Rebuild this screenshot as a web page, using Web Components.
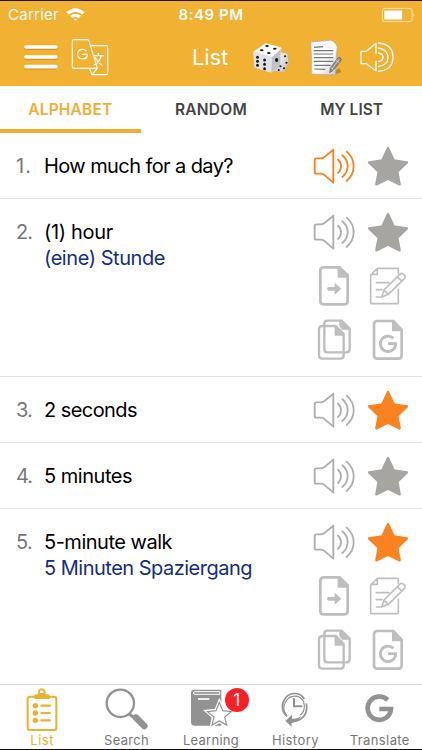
<!DOCTYPE html>
<html lang="en"><head><meta charset="utf-8"><title>List</title>
<style>html,body{margin:0;padding:0;height:750px;overflow:hidden;background:#fff}body{font-family:Inter,"Liberation Sans",sans-serif}</style></head>
<body><phrase-app></phrase-app>
<script>
const sheet = 'svg{display:block;width:100%;height:100%;overflow:visible}';
const ICONS = {
speaker:['33 15 126 126','<g fill="none" stroke="currentColor" stroke-width="5.500" stroke-linejoin="round" stroke-linecap="round"><path d="M94 29V128L66 104Q62 101 57 101H43Q38 101 38 96V60Q38 55 43 55H57Q62 55 66 52Z"/><path d="M108 59Q117 66 117 79Q117 91 108 99M121 46Q137 59 137 79Q137 98 121 111M134 35Q155 53 155 79Q155 105 134 123"/></g>'],
star:['195 15 126 126','<path d="M258 24L275 61L315 67L286 95L293 133L258 116L223 133L230 95L201 67L241 61Z" fill="currentColor" stroke="currentColor" stroke-width="7" stroke-linejoin="round"/>'],
arrow:['33 30 126 126','<path d="M64 37H113L137 61V138Q137 148 127 148H65Q55 148 55 138V47Q55 37 65 37Z" fill="none" stroke="currentColor" stroke-width="8"/><path d="M107 36H114L138 60V68H107ZM80 96H98V83L118 101L98 119V107H80Q75 107 75 101.500Q75 96 80 96Z" fill="currentColor"/>'],
edit:['195 30 126 126','<g fill="none" stroke="currentColor" stroke-width="4.800" stroke-linejoin="round" stroke-linecap="round"><path d="M289 55V40H226L206 60V144Q206 146 208 146H287Q289 146 289 144V103M226 40V58H207M223 83H261M223 104H240M223 126H238"/><path d="M246 105L293 58Q299 52 306 59Q313 66 307 71L259 118L239 126ZM246 105L259 118M286 65L299 78"/></g>'],
copy:['33 192 126 126','<g fill="none" stroke="currentColor" stroke-width="7"><path d="M101 213H61Q51 213 51 223V301Q51 311 61 311H115Q125 311 125 301V237Z"/><path d="M119 197H76Q67 197 67 206V283Q67 292 76 292H134Q143 292 143 283V221Z"/></g><path d="M98 213H103L126 236V242H98ZM112 196H119L144 220V224H120Q112 216 112 211Z" fill="currentColor"/>'],
gdoc:['195 192 126 126','<path d="M274 198H226Q216 198 216 208V300Q216 311 226 311H289Q299 311 299 301V224Z" fill="none" stroke="currentColor" stroke-width="8"/><path d="M270 197H276L300 222V229H270Z" fill="currentColor"/><path d="M274 250A23 23 0 1 0 281 266H258" fill="none" stroke="currentColor" stroke-width="8.500"/>'],
menu:['60 105 126 126','<g stroke-linecap="round" stroke-width="11"><path d="M78 141H168M78 171H168M78 200H168" stroke="#a66e20" opacity=".55"/><path d="M78 138H168M78 168H168M78 197H168" stroke="#fff"/></g>'],
translate:['207 105 126 126','<g fill="none" stroke="#fff" stroke-width="3.500" stroke-linejoin="round" stroke-linecap="round"><path d="M222 116H261Q265 116 267 120L292 202H222Q217 202 217 197V121Q217 116 222 116ZM271 134H318Q323 134 323 139V216Q323 221 318 221H276L269 203M292 202L276 221"/><path d="M259 150Q253 144 246 145Q233 147 233 159Q233 173 247 174Q262 174 262 160H248M282 164H311M295 157V164M304 165Q298 184 282 192M286 170Q293 185 306 193"/></g>'],
hspeaker:['434 105 126 126','<g fill="none" stroke="#fff" stroke-width="4" stroke-linejoin="round"><path d="M494 158V127L465 151H449V188H465L494 210V180"/><path d="M500 126Q545 130 545 169Q545 208 500 211M500 141Q530 145 530 169Q530 193 500 197M500 156Q515 158 515 169Q515 180 500 182"/></g>'],
dice:['0 0 126 126','<defs><linearGradient id="a" x2="1" y2="1"><stop stop-color="#fff"/><stop offset="1" stop-color="#bfc0c5"/></linearGradient></defs><g transform="translate(-5 0) scale(1.060 1)"><path d="M85 52Q89 47 95 50L109 52Q112 54 111 58L114 79Q114 83 111 85L103 105Q101 109 97 108L72 104Z" fill="url(#a)" stroke="#b3aba2"/><path d="M17 45L46 24Q50 21 54 23L90 34Q95 36 93 41L90 88Q90 92 86 95L67 108Q64 110 60 109L22 96Q17 94 17 90L14 51Q13 47 17 45Z" fill="#eee"/><path d="M16 47L63 61Q68 62 67 68L65 109L22 96Q17 94 17 90Z" fill="#e1e1e6"/><path d="M67 62L92 37L90 88Q90 92 86 95L65 109Z" fill="#c0c2c8"/><path d="M18 45L48 23Q51 22 54 23L90 34Q95 36 89 42L70 60Q67 63 62 61Z" fill="#fcfcfc"/><g fill="#171717"><ellipse cx="53" cy="30" rx="5" ry="3"/><ellipse cx="75" cy="38" rx="5" ry="3"/><ellipse cx="38" cy="43" rx="5" ry="3"/><ellipse cx="58" cy="51" rx="5" ry="3"/><ellipse cx="26" cy="64" rx="4" ry="4.500"/><ellipse cx="26" cy="76" rx="4" ry="4.500"/><ellipse cx="26" cy="88" rx="4" ry="4.500"/><ellipse cx="46" cy="72" rx="4" ry="4.500"/><ellipse cx="46" cy="85" rx="4" ry="4.500"/><ellipse cx="46" cy="98" rx="4" ry="4.500"/><ellipse cx="80" cy="72" rx="4.500" ry="6"/><circle cx="104" cy="61" r="3"/><circle cx="108" cy="80" r="3"/><circle cx="91" cy="91" r="3"/><circle cx="101" cy="97" r="3"/><circle cx="86" cy="102" r="3"/></g></g>'],
note:['0 0 126 126','<defs><linearGradient id="b" x2="1" y2="1"><stop stop-color="#f4f4f4"/><stop offset=".55" stop-color="#fff"/><stop offset="1" stop-color="#c8c8c8"/></linearGradient></defs><path d="M78 113L106 97L112 109L80 119Z" fill="#b6882e"/><path d="M20 18L78 13Q98 18 99 37L94 117L22 114Q24 65 20 18Z" fill="url(#b)" stroke="#aaa" stroke-width="2"/><path d="M77 13Q79 27 69 34L99 37Q96 18 77 13Z" fill="#fff" stroke="#ddd"/><path d="M30 34L57 32M29 44H88M29 54H87M30 65H88M30 76H88M31 88H80M31 99L64 100" stroke="#777" stroke-width="3.300"/><path d="M77 110L79 95L101 67Q106 61 110 66Q114 70 110 76L88 103Z" fill="#888" stroke="#666" stroke-width="2"/><path d="M84 99L105 70M80 94L89 102M96 73L106 80" stroke="#ddd" stroke-width="2.500"/>'],
list:['66 21 126 138','<path d="M92 50H105M152 50H166Q172 50 172 56V144Q172 150 166 150H92Q86 150 86 144V56Q86 50 92 50Z" fill="none" stroke="currentColor" stroke-width="6"/><path d="M106 57V47Q106 43 111 43H117Q116 25 128 25Q140 25 140 43H147Q152 43 152 48V57ZM122 39H134Q134 31 128 31Q122 31 122 39Z" fill="currentColor" fill-rule="evenodd"/><g fill="currentColor"><circle cx="109" cy="77" r="8"/><circle cx="109" cy="99" r="8"/><circle cx="109" cy="121" r="8"/></g><path d="M127 77H153M127 99H153M127 121H153" stroke="currentColor" stroke-width="6.500" stroke-linecap="round"/>'],
search:['318 21 126 138','<circle cx="361" cy="70" r="41" fill="none" stroke="currentColor" stroke-width="7"/><path d="M388 102L400 112" stroke="currentColor" stroke-width="9"/><path d="M408 113L433 138" stroke="currentColor" stroke-width="20" stroke-linecap="round"/>'],
learning:['0 0 126 138','<g transform="translate(-28 -12)"><path d="M31 30Q31 20 41 20H122V128H42Q31 128 31 117Z" fill="currentColor"/><path d="M43 26H117V34H43Q38 34 38 30T43 26Z" fill="currentColor" stroke="#fff" stroke-width="3"/><path d="M52 48H86" stroke="#fff" stroke-width="5"/><path d="M116 57L127 82L153 85L134 102L139 128L116 115L93 128L98 102L79 85L106 82Z" fill="#fff" stroke="#fff" stroke-width="10"/><path d="M116 58L126 83L152 86L132 102L138 126L116 114L94 126L100 102L80 86L106 83Z" fill="#fff" stroke="currentColor" stroke-width="3.500"/></g>'],
history:['190 18 126 138','<g fill="none" stroke="currentColor" stroke-width="5"><path d="M229 106A37 37 0 0 1 221 57A34 34 0 0 1 281 54M287 67Q294 105 260 119L242 122"/><path d="M229 104A31 31 0 0 1 225 63A30 30 0 0 1 279 62Q286 90 269 103" stroke-width="3.500"/><path d="M250 52V76H275" stroke-width="6"/></g><path d="M224 120L244 101V113Q260 115 272 105Q261 124 243 126V137Z" fill="currentColor"/>'],
google:['444 18 126 138','<path d="M530 57A35 35 0 1 0 540 84H505" fill="none" stroke="currentColor" stroke-width="14"/>'],
wifi:['198 20 58 46','<path d="M199 36Q227 12 255 36L248 43Q227 26 206 43ZM210 47Q227 34 244 47L237 54Q227 47 217 54ZM221 57Q227 53 233 57L227 63Z" fill="#fff"/>'],
battery:['508 18 106 48','<rect x="512" y="22" width="90" height="40" rx="8" fill="none" stroke="#fbe3ae" stroke-width="3"/><rect x="518" y="28" width="54" height="28" rx="2" fill="#fff"/><path d="M606 36Q612 42 606 49Z" fill="#fbe3ae"/>']
};
customElements.define('app-icon', class extends HTMLElement{
 connectedCallback(){const [box,art]=ICONS[this.getAttribute('name')];this.attachShadow({mode:'open'}).innerHTML=`<style>:host{display:block;width:42px;height:42px;flex:none}${sheet}</style><svg viewBox="${box}">${art}</svg>`}
});
// Text run whose tracking is adjusted to fill a given measure.
customElements.define('fit-text', class extends HTMLElement{
 connectedCallback(){this.attachShadow({mode:'open'}).innerHTML='<style>:host{display:inline-block;white-space:nowrap}</style><slot></slot>';
 const n=this.textContent.length,w=this.getBoundingClientRect().width,t=+this.getAttribute('measure');this.style.letterSpacing=((t-w)/n)+'px'}
});
customElements.define('status-bar', class extends HTMLElement{
 connectedCallback(){this.attachShadow({mode:'open'}).innerHTML=`<style>:host{display:grid;grid-template-columns:1fr auto 1fr;align-items:center;height:28px;color:#fff;font-size:15px;border-top:1px solid #24130b;box-sizing:border-box}
 .l{display:flex;align-items:center;gap:7px;padding-left:8px}.wifi{width:19px;height:15px}.t{font-weight:600}.battery{width:35px;height:16px;justify-self:end;margin-right:6px}</style>
 <div class="l"><fit-text measure="51">Carrier</fit-text><app-icon class="wifi" name="wifi"></app-icon></div><fit-text class="t" measure="65">8:49 PM</fit-text><app-icon class="battery" name="battery"></app-icon>`}
});
customElements.define('nav-bar', class extends HTMLElement{
 connectedCallback(){this.attachShadow({mode:'open'}).innerHTML=`<style>:host{display:flex;align-items:center;height:57px;padding:0 24px 0 20px;color:#fff;box-sizing:border-box}
 .tr{margin-left:7px}.title{margin-left:81px;font-size:22px;flex:1}.note{margin:0 10px 0 12px}</style>
 <app-icon name="menu"></app-icon><app-icon class="tr" name="translate"></app-icon><div class="title"><fit-text measure="36">List</fit-text></div><app-icon name="dice"></app-icon><app-icon class="note" name="note"></app-icon><app-icon name="hspeaker"></app-icon>`}
});
customElements.define('top-tabs', class extends HTMLElement{
 connectedCallback(){this.attachShadow({mode:'open'}).innerHTML=`<style>:host{display:grid;grid-template-columns:repeat(3,1fr);height:47px;background:#fff;font-size:15.500px;font-weight:600;color:#444}
 div{display:flex;align-items:center;justify-content:center;box-sizing:border-box;border-bottom:4px solid transparent;padding-top:4px}.on{color:#efaf31;border-color:#efaf31}</style>
 <div class="on"><fit-text measure="84">ALPHABET</fit-text></div><div><fit-text measure="72">RANDOM</fit-text></div><div><fit-text measure="63">MY LIST</fit-text></div>`}
});
customElements.define('phrase-row', class extends HTMLElement{
 connectedCallback(){const open=this.hasAttribute('open');this.attachShadow({mode:'open'}).innerHTML=`<style>:host{display:grid;grid-template-columns:28px 1fr auto;box-sizing:border-box;height:${open?178:66}px;padding:0 13px 0 16px;border-bottom:1px solid #e4e4e4;line-height:26px;font-size:20px;color:#000}
 .num{color:#777;padding-top:20px}.copy{padding-top:20px;display:flex;flex-direction:column;align-items:flex-start}::slotted([slot=translation]){color:#142d83}
 .actions{display:grid;grid-template-columns:42px 42px;column-gap:12px;grid-auto-rows:54px;align-items:center;padding-top:6px;color:#bebebe}.sound{color:${this.hasAttribute('playing')?'#f58220':'#b0aeab'}}.star{color:${this.hasAttribute('starred')?'#fa8320':'#a7a5a2'}}</style>
 <div class="num"><slot name="number"></slot></div><div class="copy"><slot></slot><slot name="translation"></slot></div><div class="actions"><app-icon class="sound" name="speaker"></app-icon><app-icon class="star" name="star"></app-icon>${open?'<app-icon name="arrow"></app-icon><app-icon name="edit"></app-icon><app-icon name="copy"></app-icon><app-icon name="gdoc"></app-icon>':''}</div>`}
});
customElements.define('bottom-tab', class extends HTMLElement{
 connectedCallback(){const b=this.getAttribute('badge');this.attachShadow({mode:'open'}).innerHTML=`<style>:host{display:flex;flex-direction:column;align-items:center;position:relative;padding-top:2px;font-size:13px;line-height:14px;color:#929292}:host([active]){color:#edb02e}
 app-icon{height:46px}.label{color:${this.hasAttribute('active')?'inherit':'#777'};margin-top:0}.badge{position:absolute;left:56px;top:3px;width:24px;height:24px;border-radius:50%;background:#fb2028;color:#fff;text-align:center;line-height:24px;font-size:17px}</style>
 <app-icon name="${this.getAttribute('icon')}"></app-icon><div class="label"><slot></slot></div>${b?`<span class="badge">${b}</span>`:''}`}
});
customElements.define('phrase-app', class extends HTMLElement{
 connectedCallback(){this.attachShadow({mode:'open'}).innerHTML=`<style>:host{display:flex;flex-direction:column;width:422px;height:750px;overflow:hidden;background:#fff}
 header{background:#f1b132;height:86px;flex:none}main{flex:1;min-height:0;overflow:hidden}nav{display:grid;grid-template-columns:repeat(5,1fr);height:66px;box-sizing:border-box;border-top:1px solid #d9d9d9;border-bottom:1px solid #111;background:#fff;flex:none}</style>
 <header><status-bar></status-bar><nav-bar></nav-bar></header><top-tabs></top-tabs>
 <main>
 <phrase-row playing><fit-text slot="number" measure="16">1.</fit-text><fit-text measure="189">How much for a day?</fit-text></phrase-row>
 <phrase-row open><fit-text slot="number" measure="16">2.</fit-text><fit-text measure="69">(1) hour</fit-text><fit-text slot="translation" measure="121">(eine) Stunde</fit-text></phrase-row>
 <phrase-row starred><fit-text slot="number" measure="16">3.</fit-text><fit-text measure="93">2 seconds</fit-text></phrase-row>
 <phrase-row><fit-text slot="number" measure="16">4.</fit-text><fit-text measure="88">5 minutes</fit-text></phrase-row>
 <phrase-row open starred><fit-text slot="number" measure="16">5.</fit-text><fit-text measure="128">5-minute walk</fit-text><fit-text slot="translation" measure="208">5 Minuten Spaziergang</fit-text></phrase-row>
 </main>
 <nav><bottom-tab icon="list" active><fit-text measure="24">List</fit-text></bottom-tab><bottom-tab icon="search"><fit-text measure="45">Search</fit-text></bottom-tab><bottom-tab icon="learning" badge="1"><fit-text measure="56">Learning</fit-text></bottom-tab><bottom-tab icon="history"><fit-text measure="47">History</fit-text></bottom-tab><bottom-tab icon="google"><fit-text measure="60">Translate</fit-text></bottom-tab></nav>`}
});
</script></body></html>
